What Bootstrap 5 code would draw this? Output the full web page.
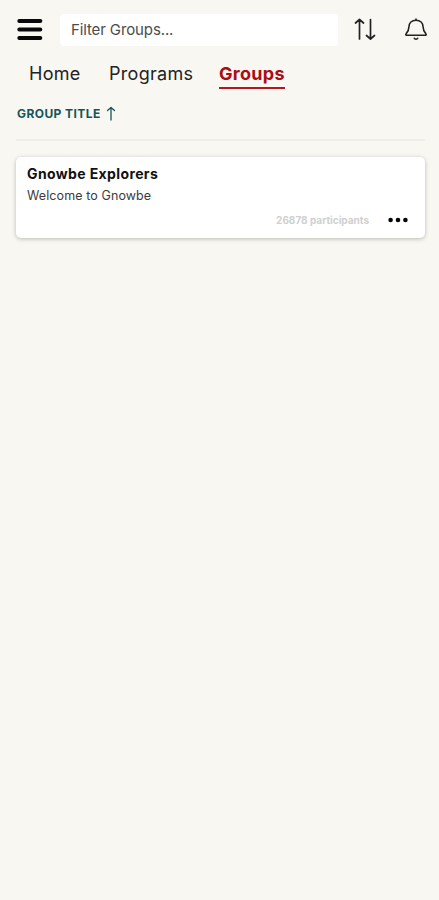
<!DOCTYPE html>
<html lang="en">
<head>
<meta charset="utf-8">
<meta name="viewport" content="width=device-width, initial-scale=1">
<title>Groups</title>
<link href="https://cdn.jsdelivr.net/npm/bootstrap@5.3.0/dist/css/bootstrap.min.css" rel="stylesheet">
<style>
body{background:#f8f7f1;font-family:Inter,"Liberation Sans",Arial,sans-serif;color:#222;min-height:100vh}
svg{display:block;flex:none}
.topbar{height:59px;padding:0 11px 0 17px}
.menu-btn{width:26px;margin-right:17px}
.filter-box,.filter-box:focus{width:278px;height:32px;border-radius:4px;padding:0 11px;font-size:15px;letter-spacing:-.12px;background:#fff;color:#444}
.filter-box::placeholder{color:#4c4c4c;opacity:1}
.sort-btn{margin-left:16px}
.bell-btn{margin-left:auto}
.tabs{height:32px;padding-left:29px;font-size:18px}
.tabs .nav-link{padding:0;height:30px;line-height:30px;color:#222;letter-spacing:.3px}
.tab-home{width:80px}
.tab-programs{width:110px}
.tabs .nav-link.active{color:#ac0c14;font-weight:700;border-bottom:2px solid #b51820}
.group-head{margin:0 14px 0 16px;height:50px;border-bottom:2px solid #efeeea;font-size:12px;letter-spacing:.42px;line-height:15px;color:#155558;padding:15px 0 0 1px}
.group-card{margin:16px 14px 0 16px;height:81px;border-radius:5px;padding:8px 17px 0 11px;box-shadow:0 1px 4px rgba(0,0,0,.25)}
.group-name{font-size:14px;letter-spacing:.38px;line-height:18px;color:#111}
.group-text{font-size:12.5px;letter-spacing:.1px;line-height:16px;margin-top:5px;color:#3c3c3c}
.group-foot{height:16px;margin-top:8px}
.count{font-size:10px;color:#d0d0d0;margin-right:19px}
</style>
</head>
<body>
<header class="topbar d-flex align-items-center">
  <button class="menu-btn btn p-0 border-0" aria-label="Menu">
    <svg width="26" height="24" viewBox="0 0 26 24"><path d="M2.300 2.900h21M2.300 11.500h21M2.300 20h21" stroke="#080808" stroke-width="4" stroke-linecap="round"/></svg>
  </button>
  <input class="filter-box form-control border-0 shadow-none" type="text" placeholder="Filter Groups..." aria-label="Filter groups">
  <button class="sort-btn btn p-0 border-0" aria-label="Sort">
    <svg width="22" height="24" viewBox="0 0 22 24" fill="none" stroke="#222" stroke-width="1.700" stroke-linecap="round" stroke-linejoin="round"><path d="M5.500 21V1.500M1.500 5l4-3.500 4 3.500M16.500 1.500v19.500M12.500 17.500l4 3.500 4-3.500"/></svg>
  </button>
  <button class="bell-btn btn p-0 border-0" aria-label="Notifications">
    <svg width="24" height="24" viewBox="0 0 24 24" fill="none" stroke="#222" stroke-width="1.600" stroke-linecap="round" stroke-linejoin="round"><path d="M12 2.200C7.800 2.200 5 5 4.900 9C4.800 13 4 14 2.200 15.700C1.400 16.600 1.900 17.300 2.900 17.300H21.100C22.100 17.300 22.600 16.600 21.800 15.700C20 14 19.200 13 19.100 9C19 5 16.200 2.200 12 2.200ZM12 2.200V1M10.300 20.300C10.800 21.600 13.200 21.600 13.700 20.300"/></svg>
  </button>
</header>
<nav class="tabs nav flex-nowrap" aria-label="Sections">
  <div class="tab-home"><a class="nav-link" href="#">Home</a></div>
  <div class="tab-programs"><a class="nav-link" href="#">Programs</a></div>
  <a class="nav-link active" href="#" aria-current="page">Groups</a>
</nav>
<main>
  <div class="group-head d-flex align-items-start fw-bold">
    <span>GROUP TITLE</span>
    <svg class="ms-1" width="12" height="16" viewBox="0 0 12 16" fill="none" stroke="#155558" stroke-width="1.300" stroke-linecap="round" stroke-linejoin="round"><path d="M6 14V1.500M2.500 4.500L6 1.500 9.500 4.500"/></svg>
  </div>
  <article class="group-card bg-white">
    <h2 class="group-name fw-bold mb-0">Gnowbe Explorers</h2>
    <p class="group-text mb-0">Welcome to Gnowbe</p>
    <div class="group-foot d-flex align-items-center justify-content-end">
      <span class="count fw-bold">26878 participants</span>
      <svg width="20" height="6" viewBox="0 0 20 6" fill="#050505"><circle cx="2.600" cy="3" r="2.300"/><circle cx="10" cy="3" r="2.300"/><circle cx="17.400" cy="3" r="2.300"/></svg>
    </div>
  </article>
</main>
<script src="https://cdn.jsdelivr.net/npm/bootstrap@5.3.0/dist/js/bootstrap.bundle.min.js"></script>
</body>
</html>
